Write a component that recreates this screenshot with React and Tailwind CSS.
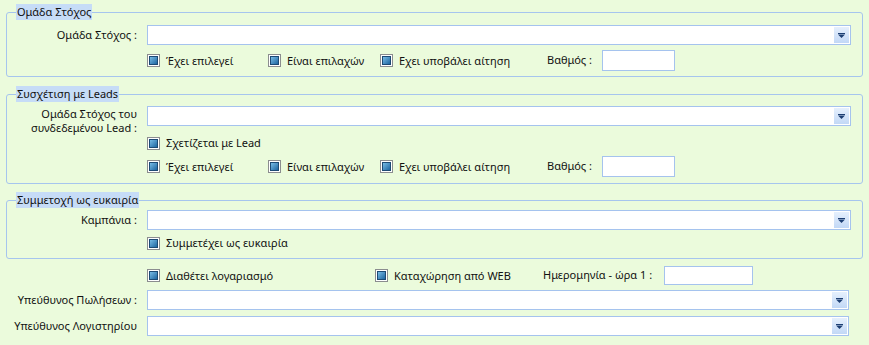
import React from 'react'

const Check = ({ label, className = '' }) => (
    <label className={`flex items-center gap-[6px] ${className}`}>
        <span className="flex h-[13px] w-[13px] shrink-0 border border-[#8b8d8f] bg-white p-[1px]">
            <span className="h-full w-full border border-[#1d4a74] bg-gradient-to-br from-[#78bde6] to-[#1c66a0]" />
        </span>
        <span className="leading-[14px]">{label}</span>
    </label>
)

const Combo = () => (
    <div className="flex h-[20px] flex-1 border border-[#a5c3ee] bg-white p-[1px]">
        <div className="flex-1" />
        <div className="flex w-[15px] items-center justify-center bg-gradient-to-b from-[#e6f0fd] to-[#c2d8f6]">
            <svg width="7" height="5" viewBox="0 0 7 5">
                <rect x="0" y="0" width="7" height="1" fill="#1d3f73" />
                <path d="M0 1.5 L7 1.5 L3.5 5 Z" fill="#1d3f73" />
            </svg>
        </div>
    </div>
)

const Box = ({ className = '' }) => (
    <div className={`border border-[#a5c3ee] bg-white ${className}`} />
)

const Group = ({ title, children, className = '' }) => (
    <fieldset className={`mx-[6px] rounded-[3px] border border-[#a6c5ee] pr-[11px] ${className}`}>
        <legend className="ml-[9px] h-[16px] bg-[#c6dcf7] px-[1px] leading-[16px]">{title}</legend>
        {children}
    </fieldset>
)

const Row = ({ label, children, className = '', labelClass = '' }) => (
    <div className={`flex ${className}`}>
        <div className={`w-[130px] shrink-0 pr-[0px] text-right ${labelClass}`}>{label}</div>
        <div className="ml-[10px] flex flex-1">{children}</div>
    </div>
)

const ScoreRow = ({ className = '' }) => (
    <Row label="" className={className}>
        <div className="flex items-center">
            <Check label="Έχει επιλεγεί" className="w-[121px]" />
            <Check label="Είναι επιλαχών" className="w-[112px]" />
            <Check label="Εχει υποβάλει αίτηση" className="w-[167px]" />
            <span className="w-[55px]">Βαθμός :</span>
            <Box className="h-[21px] w-[73px]" />
        </div>
    </Row>
)

const App = () => {
    return (
        <div
            className="h-[345px] w-[869px] bg-[#ebfbdc] pt-[4px] text-[11px] text-[#111]"
            style={{ fontFamily: '"Noto Sans", "DejaVu Sans", sans-serif' }}
        >
            <Group title="Ομάδα Στόχος" className="pb-[5px]">
                <Row label="Ομάδα Στόχος :" className="mt-[5px] items-center">
                    <Combo />
                </Row>
                <ScoreRow className="mt-[5px]" />
            </Group>

            <Group title="Συσχέτιση με Leads" className="mt-[9px] pb-[6px]">
                <Row label={<>Ομάδα Στόχος του<br />συνδεδεμένου Lead :</>} className="mt-[4px] items-start" labelClass="leading-[14px] pt-[1px]">
                    <Combo />
                </Row>
                <Row label="" className="mt-[1px]">
                    <Check label="Σχετίζεται με Lead" />
                </Row>
                <ScoreRow className="mt-[6px]" />
            </Group>

            <Group title="Συμμετοχή ως ευκαιρία" className="mt-[8px] pb-[8px]">
                <Row label="Καμπάνια :" className="mt-[2px] items-center">
                    <Combo />
                </Row>
                <Row label="" className="mt-[6px]">
                    <Check label="Συμμετέχει ως ευκαιρία" />
                </Row>
            </Group>

            <div className="pl-[7px] pr-[20px]">
                <Row label="" className="mt-[7px]">
                    <div className="flex items-center">
                        <Check label="Διαθέτει λογαριασμό" className="w-[228px]" />
                        <Check label="Καταχώρηση από WEB" className="w-[168px]" />
                        <span className="w-[121px]">Ημερομηνία - ώρα 1 :</span>
                        <Box className="h-[19px] w-[89px]" />
                    </div>
                </Row>
                <Row label="Υπεύθυνος Πωλήσεων :" className="mt-[5px] items-center">
                    <Combo />
                </Row>
                <Row label="Υπεύθυνος Λογιστηρίου" className="mt-[6px] items-center">
                    <Combo />
                </Row>
            </div>
        </div>
    )
}

export default App
